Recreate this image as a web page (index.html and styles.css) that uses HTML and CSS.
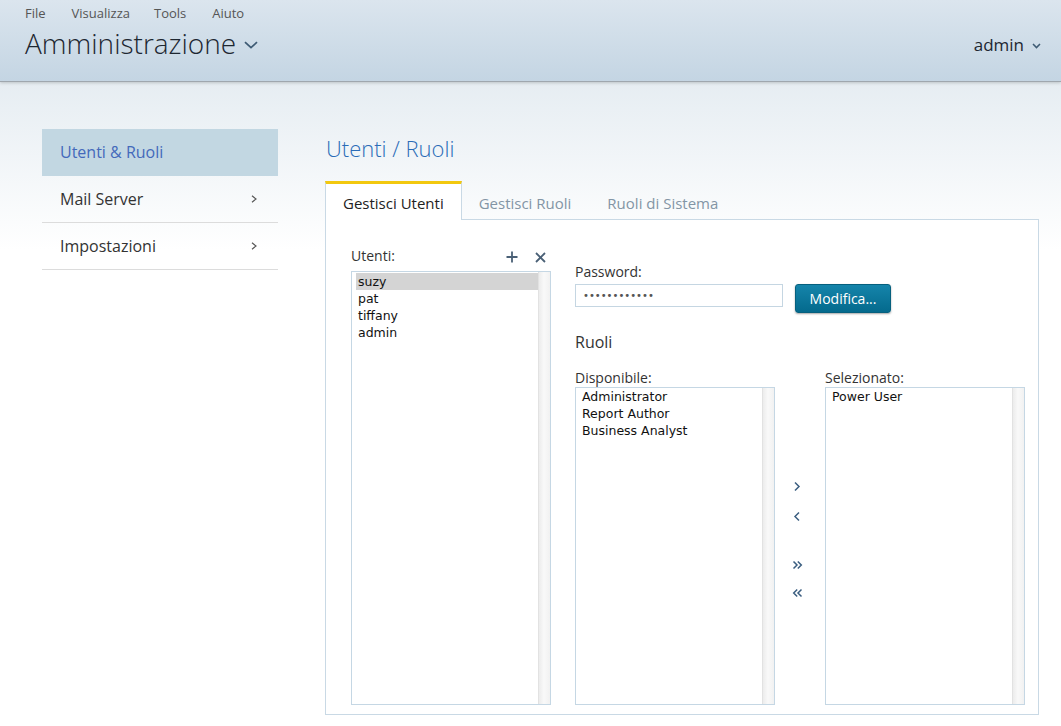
FILE: index.html
```html
<!DOCTYPE html>
<html lang="it">
<head>
<meta charset="utf-8">
<title>Amministrazione</title>
<link rel="stylesheet" href="styles.css">
</head>
<body>
<header class="topbar">
  <div class="brand">
    <nav class="menubar"><span>File</span><span>Visualizza</span><span>Tools</span><span>Aiuto</span></nav>
    <div class="app-switch"><span class="app-name">Amministrazione</span><svg class="caret-lg" width="14" height="8" viewBox="0 0 14 8"><path d="M1 1.2 L7 6.6 L13 1.2"/></svg></div>
  </div>
  <div class="user-menu"><span>admin</span><svg class="caret-sm" width="9" height="6" viewBox="0 0 9 6"><path d="M1 1 L4.5 4.6 L8 1"/></svg></div>
</header>

<main class="page">
  <aside class="sidenav">
    <a class="nav-item active">Utenti &amp; Ruoli</a>
    <a class="nav-item">Mail Server<svg class="nav-chev" width="6" height="8" viewBox="0 0 6 8"><path d="M1 0.8 L5 4 L1 7.2"/></svg></a>
    <a class="nav-item">Impostazioni<svg class="nav-chev" width="6" height="8" viewBox="0 0 6 8"><path d="M1 0.8 L5 4 L1 7.2"/></svg></a>
  </aside>

  <section class="content">
    <h1 class="page-title">Utenti / Ruoli</h1>
    <div class="tabs">
      <div class="tab active">Gestisci Utenti</div>
      <div class="tab">Gestisci Ruoli</div>
      <div class="tab">Ruoli di Sistema</div>
    </div>
    <div class="panel">
      <div class="users-col">
        <div class="col-head">
          <span class="field-label">Utenti:</span>
          <div class="icon-actions">
            <svg class="icon" width="12" height="12" viewBox="0 0 12 12"><path d="M6 0.5 V11.5 M0.5 6 H11.5"/></svg>
            <svg class="icon" width="11" height="11" viewBox="0 0 11 11"><path d="M1 1 L10 10 M10 1 L1 10"/></svg>
          </div>
        </div>
        <div class="listbox">
          <ul class="list-items">
            <li class="selected">suzy</li>
            <li>pat</li>
            <li>tiffany</li>
            <li>admin</li>
          </ul>
          <div class="scrollbar"></div>
        </div>
      </div>

      <div class="details">
        <div class="field-label pw-label">Password:</div>
        <div class="pw-row">
          <input class="pw-input" type="password" value="xxxxxxxxxxxx">
          <button class="btn-primary" type="button">Modifica...</button>
        </div>
        <h2 class="section-title">Ruoli</h2>
        <div class="roles">
          <div class="role-col">
            <div class="field-label list-label">Disponibile:</div>
            <div class="listbox">
              <ul class="list-items">
                <li>Administrator</li>
                <li>Report Author</li>
                <li>Business Analyst</li>
              </ul>
              <div class="scrollbar"></div>
            </div>
          </div>
          <div class="transfer">
            <button class="move-btn" type="button"><svg width="8" height="11" viewBox="0 0 8 11"><path d="M2 1.5 L6 5.5 L2 9.5"/></svg></button>
            <button class="move-btn gap-s" type="button"><svg width="8" height="11" viewBox="0 0 8 11"><path d="M6 1.5 L2 5.5 L6 9.5"/></svg></button>
            <button class="move-btn gap-l" type="button"><svg width="11" height="10" viewBox="0 0 11 10"><path d="M1.5 1.5 L5 5 L1.5 8.5 M5.8 1.5 L9.3 5 L5.8 8.5"/></svg></button>
            <button class="move-btn gap-xs" type="button"><svg width="11" height="10" viewBox="0 0 11 10"><path d="M5.2 1.5 L1.7 5 L5.2 8.5 M9.5 1.5 L6 5 L9.5 8.5"/></svg></button>
          </div>
          <div class="role-col">
            <div class="field-label list-label">Selezionato:</div>
            <div class="listbox">
              <ul class="list-items">
                <li>Power User</li>
              </ul>
              <div class="scrollbar"></div>
            </div>
          </div>
        </div>
      </div>
    </div>
  </section>
</main>
</body>
</html>
```

FILE: styles.css
```css
* { box-sizing: border-box; }

html, body { margin: 0; padding: 0; }

body {
  min-height: 100vh;
  font-family: "Open Sans", "Noto Sans", sans-serif;
  color: #333;
  background: linear-gradient(to bottom, #e6edf2 82px, #ffffff 250px);
}

/* ---------- top bar ---------- */
.topbar {
  height: 82px;
  display: flex;
  justify-content: space-between;
  align-items: flex-start;
  padding: 5px 20px 0 25px;
  background: linear-gradient(to bottom, #dbe5ee 0%, #c4d5e3 100%);
  border-bottom: 1px solid #9fa7ae;
  box-shadow: 0 1px 3px rgba(0, 0, 0, 0.18);
}

.menubar {
  display: flex;
  gap: 24px;
  font-size: 13px;
  line-height: 16px;
  color: #555;
}

.menubar span:nth-child(2) { margin-left: 2px; }
.menubar span:nth-child(4) { margin-left: 2px; }

.app-switch {
  display: flex;
  align-items: center;
  gap: 8px;
  margin-top: 4px;
}

.app-name {
  font-size: 28px;
  font-weight: 300;
  line-height: 36px;
  color: #1d2731;
}

.caret-lg path, .caret-sm path {
  fill: none;
  stroke: #3e5b74;
  stroke-width: 1.8;
}

.caret-lg { margin-top: 4px; }

.user-menu {
  display: flex;
  align-items: center;
  gap: 8px;
  margin-top: 28px;
  font-size: 17px;
  line-height: 24px;
  color: #1d2731;
}

.caret-sm { margin-top: 2px; }
.caret-sm path { stroke-width: 1.5; }

/* ---------- page layout ---------- */
.page {
  display: flex;
  gap: 47px;
  padding: 47px 22px 0 42px;
}

.sidenav {
  width: 236px;
  flex: none;
  display: flex;
  flex-direction: column;
}

.nav-item {
  display: flex;
  justify-content: space-between;
  align-items: center;
  height: 47px;
  padding: 0 21px 0 18px;
  font-size: 16px;
  color: #333;
  border-bottom: 1px solid #dcdcdc;
}

.nav-item.active {
  background: #c2d7e2;
  color: #4469bb;
  border-bottom-color: transparent;
}

.nav-chev path {
  fill: none;
  stroke: #555;
  stroke-width: 1.2;
}

.content {
  flex: 1;
  display: flex;
  flex-direction: column;
}

.page-title {
  margin: 4px 0 18px 1px;
  font-size: 22px;
  font-weight: 300;
  line-height: 30px;
  color: #2b6cb7;
}

/* ---------- tabs ---------- */
.tabs {
  display: flex;
  margin-bottom: -1px;
  position: relative;
  z-index: 1;
}

.tab {
  padding: 3px 16px 1px;
  font-size: 15px;
  line-height: 32px;
  color: #8395a5;
  border: 1px solid transparent;
  border-top-width: 3px;
  border-bottom: none;
}

.tab.active {
  padding: 3px 17px 1px;
  color: #222;
  background: #fff;
  border-color: #c9d9e5;
  border-top-color: #f2c80f;
}

.tab:last-child { margin-left: 2px; }

/* ---------- panel ---------- */
.panel {
  height: 496px;
  display: flex;
  gap: 24px;
  padding: 24px 13px 9px 25px;
  background: #fff;
  border: 1px solid #c9d9e5;
}

.users-col {
  width: 200px;
  display: flex;
  flex-direction: column;
}

.col-head {
  height: 24px;
  margin-bottom: 3px;
  display: flex;
  justify-content: space-between;
  align-items: center;
}

.field-label {
  font-size: 14px;
  line-height: 20px;
  color: #333;
}

.icon-actions {
  display: flex;
  align-items: center;
  gap: 17px;
  padding-right: 5px;
  margin-top: 2px;
}

.icon path {
  fill: none;
  stroke: #4a6076;
  stroke-width: 1.8;
}

.listbox {
  flex: 1;
  display: flex;
  border: 1px solid #c5d7e4;
  background: #fff;
}

.list-items {
  flex: 1;
  margin: 0;
  padding: 1px 0 0 4px;
  list-style: none;
  font-family: "DejaVu Sans", sans-serif;
  font-size: 12.5px;
  line-height: 17px;
  color: #111;
}

.role-col .list-items { padding-top: 0; }

.list-items li {
  padding-left: 2px;
}

.list-items li.selected {
  background: #d4d4d4;
}

.scrollbar {
  width: 12px;
  flex: none;
  border-left: 1px solid #e2e2e2;
  background: linear-gradient(to right, #ececec 0%, #f9f9f9 45%, #f1f1f1 100%);
}

/* ---------- details ---------- */
.details {
  flex: 1;
  display: flex;
  flex-direction: column;
}

.pw-label { margin-top: 18px; }

.pw-row {
  margin-top: 2px;
  display: flex;
  align-items: flex-start;
  gap: 12px;
}

.pw-input {
  width: 208px;
  height: 23px;
  margin: 0;
  padding: 0 7px;
  border: 1px solid #c5d6e2;
  font-family: "DejaVu Sans", sans-serif;
  font-size: 10px;
  color: #555;
  background: #fff;
  outline: none;
}

.btn-primary {
  width: 96px;
  height: 29px;
  margin: 0;
  padding: 0;
  font-family: "Open Sans", sans-serif;
  font-size: 14px;
  color: #fff;
  background: linear-gradient(to bottom, #1584aa 0%, #046a8d 100%);
  border: 1px solid #06607e;
  border-radius: 3px;
  box-shadow: 0 1px 2px rgba(0, 0, 0, 0.35);
}

.section-title {
  margin: 18px 0 0;
  font-size: 16px;
  font-weight: 400;
  line-height: 22px;
  color: #333;
}

.roles {
  flex: 1;
  margin-top: 16px;
  display: flex;
}

.role-col {
  width: 200px;
  display: flex;
  flex-direction: column;
}

.list-label { line-height: 18px; }

.transfer {
  width: 50px;
  display: flex;
  flex-direction: column;
  align-items: center;
  padding: 107px 6px 0 0;
}

.move-btn {
  width: 20px;
  height: 20px;
  margin: 0;
  padding: 0;
  border: none;
  background: transparent;
  display: flex;
  align-items: center;
  justify-content: center;
}

.move-btn.gap-s { margin-top: 10px; }
.move-btn.gap-l { margin-top: 29px; }
.move-btn.gap-xs { margin-top: 8px; }

.move-btn path {
  fill: none;
  stroke: #3b5e80;
  stroke-width: 1.5;
}
```
